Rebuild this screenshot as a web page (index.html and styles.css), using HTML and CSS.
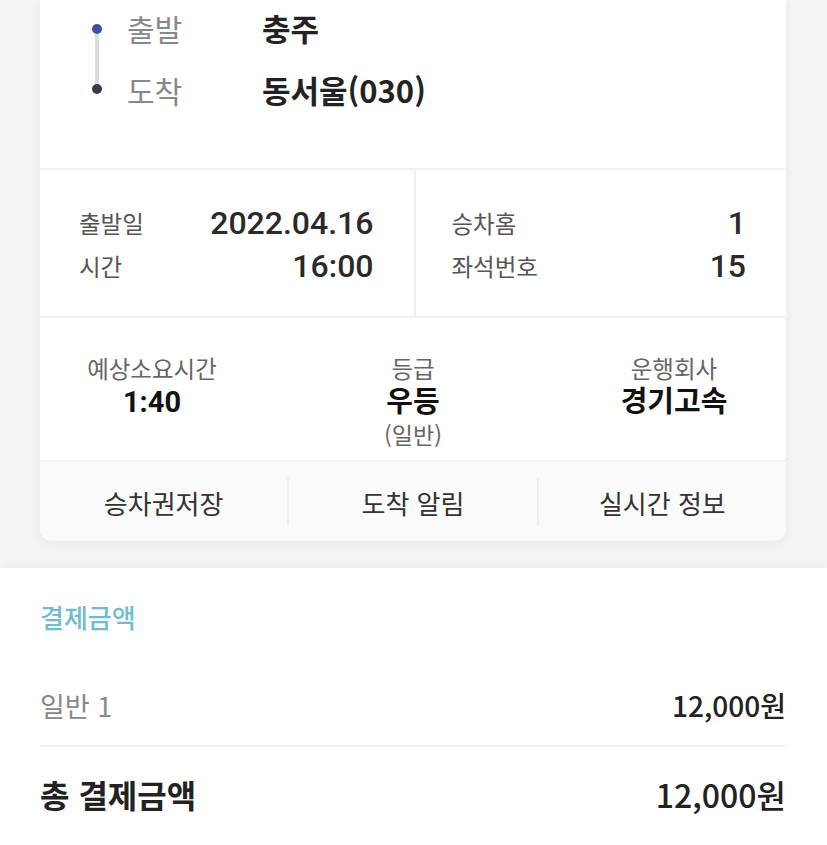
FILE: index.html
```html
<!DOCTYPE html>
<html lang="ko">
<head>
  <meta charset="UTF-8" />
  <title>승차권 상세</title>
  <link rel="stylesheet" href="styles.css">
</head>
<body>
  <div class="ticket-area">
    <div class="ticket">
      <div class="route">
        <div class="track">
          <span class="dot dot-start"></span>
          <span class="track-line"></span>
          <span class="dot dot-end"></span>
        </div>
        <span class="route-label">출발</span>
        <span class="route-value">충주</span>
        <span class="route-label">도착</span>
        <span class="route-value">동서울(030)</span>
      </div>

      <div class="info">
        <div class="info-col">
          <div class="info-row"><span class="info-label">출발일</span><span class="info-value">2022.04.16</span></div>
          <div class="info-row"><span class="info-label">시간</span><span class="info-value">16:00</span></div>
        </div>
        <div class="info-col">
          <div class="info-row"><span class="info-label">승차홈</span><span class="info-value">1</span></div>
          <div class="info-row"><span class="info-label">좌석번호</span><span class="info-value">15</span></div>
        </div>
      </div>

      <div class="summary">
        <div class="summary-item">
          <div class="summary-label">예상소요시간</div>
          <div class="summary-value">1:40</div>
        </div>
        <div class="summary-item">
          <div class="summary-label">등급</div>
          <div class="summary-value">우등</div>
          <div class="summary-sub">(일반)</div>
        </div>
        <div class="summary-item">
          <div class="summary-label">운행회사</div>
          <div class="summary-value">경기고속</div>
        </div>
      </div>

      <div class="actions">
        <button class="action">승차권저장</button>
        <button class="action">도착 알림</button>
        <button class="action">실시간 정보</button>
      </div>
    </div>
  </div>

  <div class="payment">
    <h2 class="payment-title">결제금액</h2>
    <div class="pay-row">
      <span class="pay-label">일반 1</span>
      <span class="pay-amount">12,000원</span>
    </div>
    <div class="pay-row pay-total">
      <span class="pay-label">총 결제금액</span>
      <span class="pay-amount">12,000원</span>
    </div>
  </div>
</body>
</html>
```

FILE: styles.css
```css
html, body {
  margin: 0;
  padding: 0;
  background: #f4f4f6;
  font-family: "Noto Sans CJK KR", "Noto Sans", sans-serif;
  color: #222;
}

.ticket-area {
  padding: 0 41px 27px 40px;
}

.ticket {
  background: #fff;
  border-radius: 0 0 12px 12px;
  box-shadow: 0 2px 10px rgba(0, 0, 0, 0.06);
  overflow: hidden;
}

/* route */
.route {
  display: grid;
  grid-template-columns: 10px 110px 1fr;
  grid-template-rows: 40px 40px;
  column-gap: 25px;
  row-gap: 22px;
  padding: 8px 0 58px 52px;
  border-bottom: 2px solid #f0f0f0;
  align-items: center;
}

.track {
  grid-row: 1 / 3;
  grid-column: 1;
  align-self: stretch;
  display: flex;
  flex-direction: column;
  align-items: center;
  padding: 16px 0;
}

.dot {
  width: 10px;
  height: 10px;
  border-radius: 50%;
  flex: none;
}

.dot-start { background: #3d4fa3; }
.dot-end { background: #343a46; }

.track-line {
  flex: 1;
  width: 4px;
  background: #dcdcdc;
}

.route-label {
  font-size: 30px;
  color: #888;
  line-height: 40px;
}

.route-value {
  font-size: 31px;
  font-weight: 700;
  color: #222;
  line-height: 40px;
}

/* info */
.info {
  display: flex;
  border-bottom: 2px solid #f0f0f0;
}

.info-col {
  flex: 1;
  padding: 33px 40px 30px 39px;
  display: flex;
  flex-direction: column;
  gap: 3px;
}

.info-col + .info-col {
  border-left: 2px solid #f0f0f0;
  padding-left: 36px;
}

.info-row {
  display: flex;
  justify-content: space-between;
  align-items: center;
  height: 40px;
}

.info-label {
  font-size: 23.5px;
  color: #555;
}

.info-value {
  font-family: Roboto, "Noto Sans CJK KR", sans-serif;
  font-size: 32px;
  font-weight: 500;
  color: #2a2a2a;
}

/* summary */
.summary {
  display: grid;
  grid-template-columns: 224px 298px 1fr;
  padding: 35px 0 13px;
  border-bottom: 2px solid #f0f0f0;
  text-align: center;
}

.summary-label {
  font-size: 23.5px;
  color: #666;
  line-height: 30px;
}

.summary-value {
  font-family: Roboto, "Noto Sans CJK KR", sans-serif;
  font-size: 29px;
  font-weight: 700;
  color: #111;
  line-height: 38px;
}

.summary-sub {
  font-size: 23px;
  color: #666;
  line-height: 26px;
}

/* actions */
.actions {
  display: flex;
  background: #fafafa;
  padding: 16px 0 15px;
}

.action {
  flex: 1;
  height: 48px;
  border: none;
  background: none;
  font-family: "Noto Sans CJK KR", sans-serif;
  font-size: 26px;
  color: #333;
  cursor: pointer;
  padding: 0;
}

.action + .action {
  border-left: 2px solid #efefef;
}

/* payment */
.payment {
  background: #fff;
  box-shadow: 0 -3px 8px rgba(0, 0, 0, 0.04);
  padding: 31px 41px 40px 40px;
}

.payment-title {
  margin: 0 0 50px;
  font-size: 26px;
  font-weight: 500;
  color: #6fbcd1;
  line-height: 36px;
}

.pay-row {
  display: flex;
  justify-content: space-between;
  align-items: center;
  height: 40px;
  padding-bottom: 20px;
}

.pay-label {
  font-size: 27px;
  color: #888;
}

.pay-amount {
  font-size: 28px;
  font-weight: 500;
  color: #222;
}

.pay-total {
  border-top: 2px solid #f0f0f0;
  padding: 27px 0 0;
}

.pay-total .pay-label {
  font-size: 32px;
  font-weight: 700;
  color: #222;
}

.pay-total .pay-amount {
  font-size: 32px;
}
```
